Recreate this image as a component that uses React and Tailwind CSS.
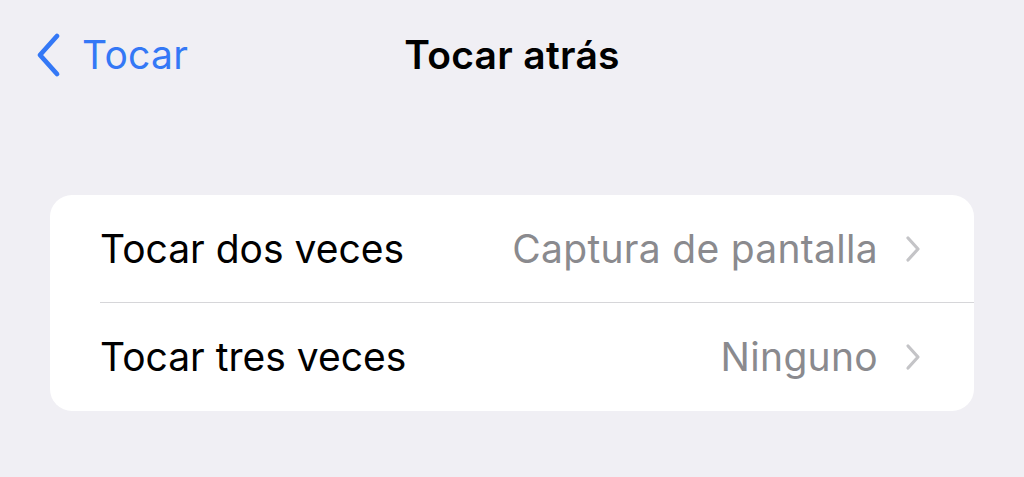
import React from 'react';

const Chevron = () => (
  <svg width="18" height="30" viewBox="0 0 18 30" className="ml-[26px]">
    <path d="M4 4 L14 15 L4 26" fill="none" stroke="#c4c4c7" strokeWidth="3.2" strokeLinecap="round" strokeLinejoin="round" />
  </svg>
);

const Row = ({ label, value, last }) => (
  <div className="flex h-[108px] items-center pl-[50px]">
    <div className={`flex h-full flex-1 items-center pr-[52px] ${last ? '' : 'border-b-[1.5px] border-[#d6d6d9]'}`}>
      <span className="flex-1 tracking-[0px] text-black">{label}</span>
      <span className="text-[#8a8a8e]">{value}</span>
      <Chevron />
    </div>
  </div>
);

const App = () => {
  return (
    <div
      className="h-[477px] w-[1024px] overflow-hidden bg-[#f0eff4] text-[39px] leading-[46px] tracking-[0.3px]"
      style={{ fontFamily: 'Inter, "Noto Sans", sans-serif' }}
    >
      <div className="relative flex h-[110px] items-start pt-[32px]">
        <div className="flex items-center pl-[35px] text-[#3478f6]">
          <svg width="27" height="46" viewBox="0 0 27 46">
            <path d="M22 4 L5 23 L22 42" fill="none" stroke="#3478f6" strokeWidth="4.8" strokeLinecap="round" strokeLinejoin="round" />
          </svg>
          <span className="ml-[20px]">Tocar</span>
        </div>
        <div className="absolute left-0 right-0 top-[32px] text-center font-semibold text-black">Tocar atrás</div>
      </div>
      <div className="mx-[50px] mt-[85px] overflow-hidden rounded-[22px] bg-white">
        <Row label="Tocar dos veces" value="Captura de pantalla" />
        <Row label="Tocar tres veces" value="Ninguno" last />
      </div>
    </div>
  );
};

export default App;
